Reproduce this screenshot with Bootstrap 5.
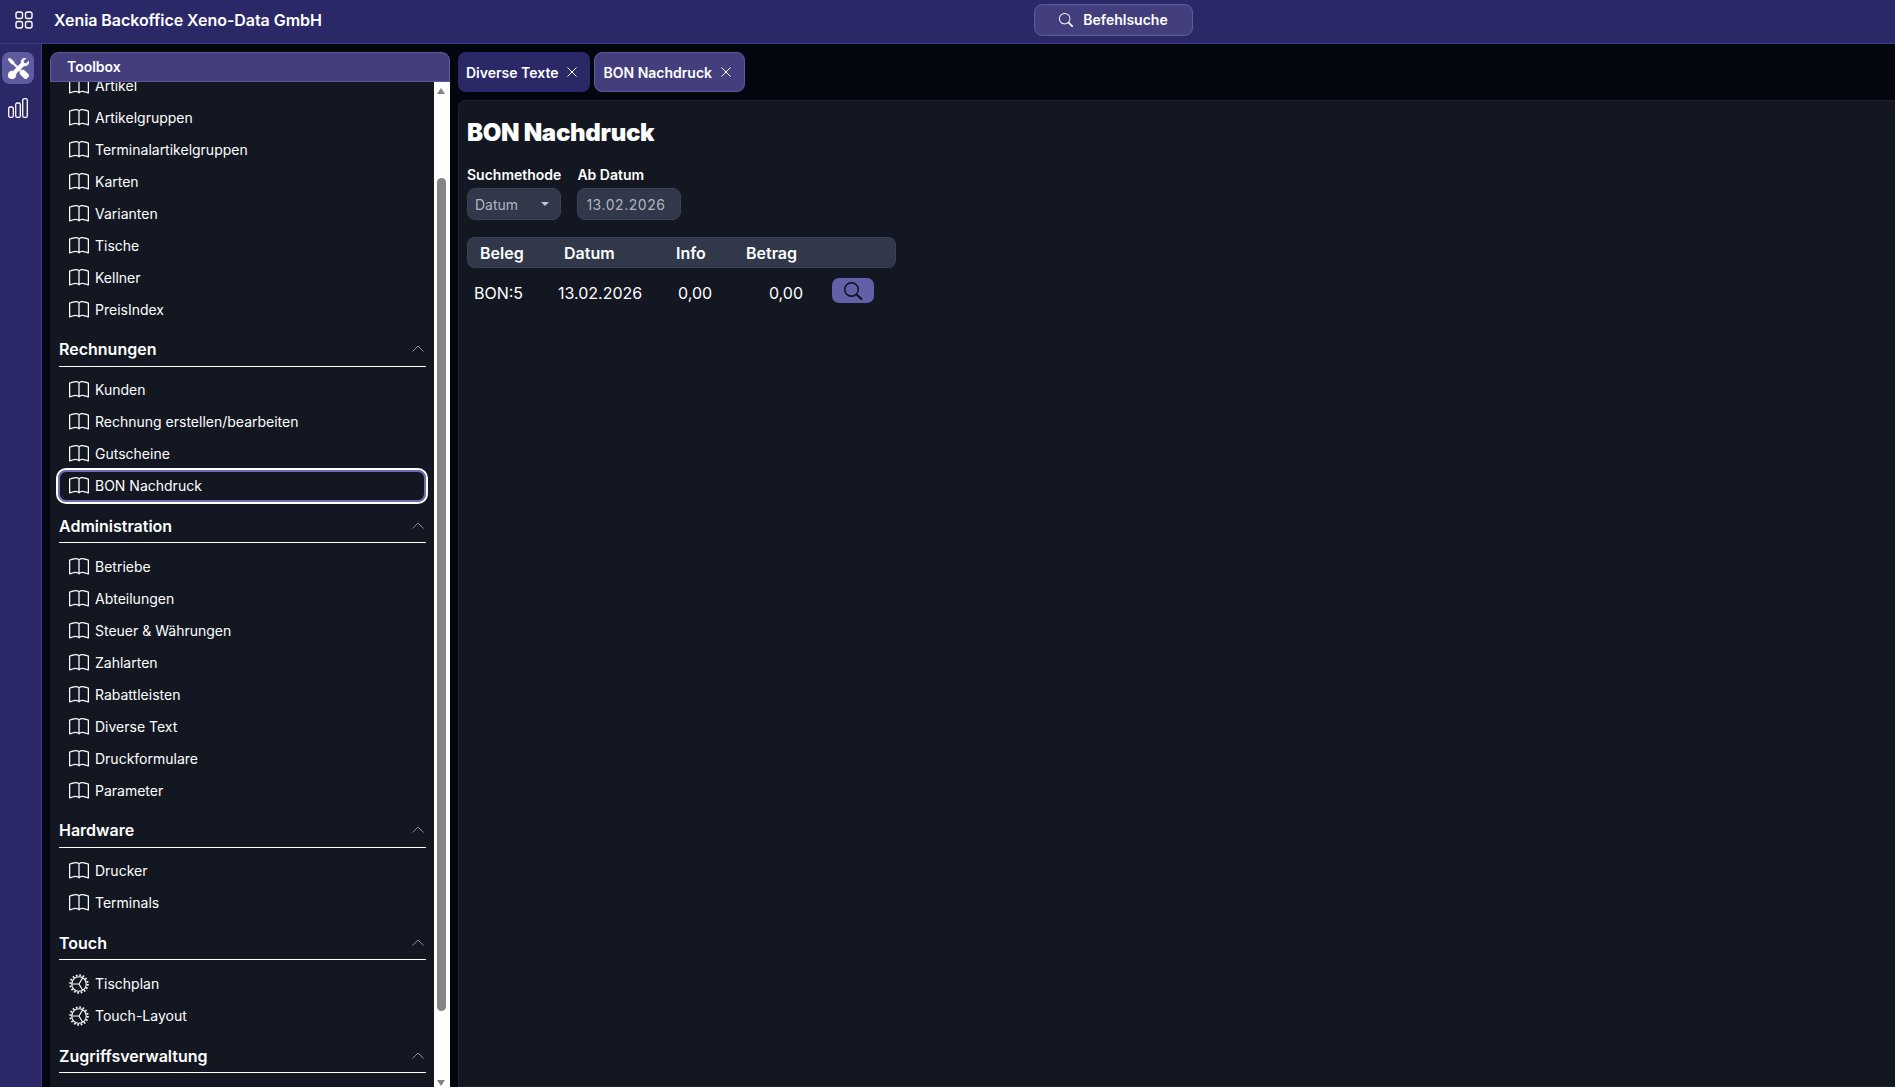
<!DOCTYPE html>
<html lang="de">
<head>
<meta charset="utf-8">
<title>Xenia Backoffice</title>
<link href="https://cdn.jsdelivr.net/npm/bootstrap@5.3.0/dist/css/bootstrap.min.css" rel="stylesheet">
<style>
html,body{height:100%;}
body{background:#04060f;color:#fff;font-family:Inter,"Liberation Sans",sans-serif;font-size:14px;overflow:hidden;}
.app-top{height:44px;background:#2b2868;border-bottom:1px solid #3f3d7c;position:relative;padding-bottom:3px;}
.app-top .grid-ic{width:20px;height:20px;margin-left:14px;margin-right:20px;}
.app-title{font-size:16px;font-weight:600;letter-spacing:-.06px;}
.cmd-btn{position:absolute;left:1034px;top:4px;width:159px;height:32px;background:#433f7c;border:1px solid #5a5a9c;border-radius:8px;color:#fff;font-size:14px;font-weight:600;gap:10px;padding:0 0 1px;}
.app-main{height:1043px;}
.app-rail{width:42px;background:#2b2868;border-right:1px solid #3f3d7c;padding-top:8px;}
.rail-btn{width:32px;height:32px;margin-left:2px;border-radius:8px;margin-bottom:8px;}
.rail-btn.on{background:#5e5c9f;}
.side-panel{width:400px;margin:8px 8px 0 8px;border-radius:8px 8px 0 0;overflow:hidden;}
.side-head{height:30px;background:#433f7c;border:1px solid #5a5a9c;border-radius:8px 8px 0 0;padding-left:16px;font-weight:600;font-size:14px;line-height:27px;}
.side-body{height:1005px;background:#131722;}
.side-view{width:384px;overflow:hidden;}
.side-list{margin:-13px 0 0;padding:0;list-style:none;}
.side-link{height:32px;margin:0 8px;padding-left:11px;gap:6px;color:#fff;font-size:14px;}
.side-link svg{width:20px;height:20px;flex:none;margin-top:1px;}
.side-link.cur{outline:2px solid #fff;outline-offset:0;border:2px solid #6f6db5;border-radius:8px;padding-left:9px;}
.side-sec{height:41.6px;margin:0 8px 7px 9px;border-bottom:1px solid #fff;font-size:16px;font-weight:600;padding-top:8px;}
.side-sec svg{width:14px;height:14px;margin-right:1px;color:#8a8d99;}
.fake-bar{width:16px;background:#fff;position:relative;}
.fake-thumb{position:absolute;left:3px;width:9px;top:96px;height:833px;background:#858585;border-radius:5px;}
.fake-arrow{position:absolute;left:3px;width:0;height:0;border-left:4.5px solid transparent;border-right:4.5px solid transparent;}
.fake-arrow.up{top:6px;border-bottom:6px solid #858585;}
.fake-arrow.down{bottom:1px;border-top:6px solid #858585;}
.work{min-width:0;padding-top:8px;}
.tab-strip{gap:4px;height:40px;}
.tab-pill{height:40px;background:#2b2868;border-radius:8px;padding:0 12px 0 8px;gap:8px;font-weight:600;font-size:14px;}
.tab-pill.act{background:#433f7c;border:1px solid #5a5a9c;padding:0 12px 0 8px;}
.tab-pill svg{width:12px;height:12px;}
.work-card{height:987px;margin-top:8px;background:#131722;border:1px solid #1e2330;border-right:0;border-radius:8px 0 0 0;padding:8px;}
.work-card h1{font-size:24px;font-weight:900;letter-spacing:-.3px;margin:9px 0 19px;line-height:29px;}
.fld-label{font-size:14px;font-weight:600;line-height:17px;margin-bottom:5px;}
.fld-box{height:32px;background:#30384a;border:1px solid #3a4254;border-radius:8px;color:#b0b5c0;font-size:14px;}
.fld-sel{width:94px;padding:0 11px 0 7px;}
.fld-sel i{border-left:4px solid transparent;border-right:4px solid transparent;border-top:4px solid #c5c8d0;}
.fld-date{width:104px;padding-left:8px;letter-spacing:.55px;}
.bon-table{width:429px;margin-top:17px;border-collapse:separate;border-spacing:0;table-layout:fixed;}
.bon-table th{height:31px;background:#30384a;border-top:1px solid #3a4254;border-bottom:1px solid #3a4254;font-size:16px;font-weight:600;padding:0 0 0 13px;}
.bon-table th:first-child{border-left:1px solid #3a4254;border-radius:8px 0 0 8px;padding-left:12px;}
.bon-table th:last-child{border-right:1px solid #3a4254;border-radius:0 8px 8px 0;}
.bon-table td{height:50px;font-size:16px;padding:0 0 0 7px;}
.bon-table td.num-i{padding-left:15px;}
.bon-table td.num-b{text-align:right;padding-right:0;}
.bon-table td.act-c{padding-left:29px;padding-bottom:5px;}
.look-btn{width:42px;height:25px;background:#6260a8;border:0;border-radius:7px;padding:0;color:#0a0c14;}
.look-btn svg{width:22px;height:22px;}
</style>
</head>
<body>
<svg width="0" height="0" class="position-absolute">
<defs>
<symbol id="i-book" viewBox="0 0 16 16"><path fill="currentColor" d="M1 2.828c.885-.37 2.154-.769 3.388-.893 1.33-.134 2.458.063 3.112.752v9.746c-.935-.53-2.12-.603-3.213-.493-1.18.12-2.37.461-3.287.811V2.828zm7.5-.141c.654-.689 1.782-.886 3.112-.752 1.234.124 2.503.523 3.388.893v9.923c-.918-.35-2.107-.692-3.287-.81-1.094-.111-2.278-.039-3.213.492V2.687zM8 1.783C7.015.936 5.587.81 4.287.94c-1.514.153-3.042.672-3.994 1.105A.5.5 0 0 0 0 2.5v11a.5.5 0 0 0 .707.455c.882-.4 2.303-.881 3.68-1.02 1.409-.142 2.59.087 3.223.877a.5.5 0 0 0 .78 0c.633-.79 1.814-1.019 3.222-.877 1.378.139 2.8.62 3.681 1.02A.5.5 0 0 0 16 13.5v-11a.5.5 0 0 0-.293-.455c-.952-.433-2.48-.952-3.994-1.105C10.413.809 8.985.936 8 1.783z"/></symbol>
<symbol id="i-gear" viewBox="0 0 16 16"><g fill="none" stroke="currentColor"><circle cx="8" cy="8" r="5.8" stroke-width=".9"/><circle cx="8" cy="8" r="7" stroke-width="1.6" stroke-dasharray="1.3 1.45"/><path d="M8 8H2.2M8 8l2.9-5M8 8l2.9 5" stroke-width=".9"/></g></symbol>
<symbol id="i-up" viewBox="0 0 14 14"><path fill="none" stroke="currentColor" d="M1.5 9.5 7 4l5.5 5.5"/></symbol>
<symbol id="i-x" viewBox="0 0 12 12"><path fill="none" stroke="currentColor" d="M1.5 1.5l9 9M10.5 1.5l-9 9"/></symbol>
<symbol id="i-search" viewBox="0 0 16 16"><path fill="currentColor" d="M11.742 10.344a6.5 6.5 0 1 0-1.397 1.398h-.001c.03.04.062.078.098.115l3.85 3.85a1 1 0 0 0 1.415-1.414l-3.85-3.85a1.007 1.007 0 0 0-.115-.1zM12 6.5a5.5 5.5 0 1 1-11 0 5.5 5.5 0 0 1 11 0z"/></symbol>
</defs>
</svg>

<header class="app-top d-flex align-items-center">
  <svg class="grid-ic" viewBox="0 0 20 20" fill="none" stroke="#fff" stroke-width="1.4"><rect x="2" y="2" width="6.5" height="6.5" rx="2"/><rect x="11.5" y="2" width="6.5" height="6.5" rx="2"/><rect x="2" y="11.5" width="6.5" height="6.5" rx="2"/><rect x="11.5" y="11.5" width="6.5" height="6.5" rx="2"/></svg>
  <span class="app-title">Xenia Backoffice Xeno-Data GmbH</span>
  <button type="button" class="cmd-btn d-flex align-items-center justify-content-center">
    <svg width="14" height="14"><use href="#i-search"/></svg>Befehlsuche
  </button>
</header>

<div class="app-main d-flex">
  <nav class="app-rail flex-shrink-0">
    <div class="rail-btn on d-flex align-items-center justify-content-center">
      <svg width="21" height="21" viewBox="0 0 16 16" fill="#fff" stroke="#fff" stroke-width=".5"><path d="M1 0 0 1l2.2 3.081a1 1 0 0 0 .815.419h.07a1 1 0 0 1 .708.293l2.675 2.675-2.617 2.654A3.003 3.003 0 0 0 0 13a3 3 0 1 0 5.878-.851l2.654-2.617.968.968-.305.914a1 1 0 0 0 .242 1.023l3.27 3.27a.997.997 0 0 0 1.414 0l1.586-1.586a.997.997 0 0 0 0-1.414l-3.27-3.27a1 1 0 0 0-1.023-.242L10.5 9.5l-.96-.96 2.68-2.643A3.005 3.005 0 0 0 16 3c0-.269-.035-.53-.102-.777l-2.14 2.141L12 4l-.364-1.757L13.777.102a3 3 0 0 0-3.675 3.68L7.462 6.46 4.793 3.793a1 1 0 0 1-.293-.707v-.071a1 1 0 0 0-.419-.814L1 0Z"/></svg>
    </div>
    <div class="rail-btn d-flex align-items-center justify-content-center">
      <svg width="20" height="20" viewBox="0 0 20 20" fill="none" stroke="#fff" stroke-width="1.3"><rect x=".7" y="9" width="4.6" height="10.3" rx="1.6"/><rect x="7.7" y="5" width="4.6" height="14.3" rx="1.6"/><rect x="14.7" y=".7" width="4.6" height="18.6" rx="1.6"/></svg>
    </div>
  </nav>

  <aside class="side-panel flex-shrink-0">
    <div class="side-head">Toolbox</div>
    <div class="side-body d-flex justify-content-between">
      <div class="side-view">
        <ul class="side-list">
          <li class="side-link d-flex align-items-center"><svg><use href="#i-book"/></svg>Artikel</li>
          <li class="side-link d-flex align-items-center"><svg><use href="#i-book"/></svg>Artikelgruppen</li>
          <li class="side-link d-flex align-items-center"><svg><use href="#i-book"/></svg>Terminalartikelgruppen</li>
          <li class="side-link d-flex align-items-center"><svg><use href="#i-book"/></svg>Karten</li>
          <li class="side-link d-flex align-items-center"><svg><use href="#i-book"/></svg>Varianten</li>
          <li class="side-link d-flex align-items-center"><svg><use href="#i-book"/></svg>Tische</li>
          <li class="side-link d-flex align-items-center"><svg><use href="#i-book"/></svg>Kellner</li>
          <li class="side-link d-flex align-items-center"><svg><use href="#i-book"/></svg>PreisIndex</li>
          <li class="side-sec d-flex align-items-center justify-content-between"><span>Rechnungen</span><svg><use href="#i-up"/></svg></li>
          <li class="side-link d-flex align-items-center"><svg><use href="#i-book"/></svg>Kunden</li>
          <li class="side-link d-flex align-items-center"><svg><use href="#i-book"/></svg>Rechnung erstellen/bearbeiten</li>
          <li class="side-link d-flex align-items-center"><svg><use href="#i-book"/></svg>Gutscheine</li>
          <li class="side-link cur d-flex align-items-center"><svg><use href="#i-book"/></svg>BON Nachdruck</li>
          <li class="side-sec d-flex align-items-center justify-content-between"><span>Administration</span><svg><use href="#i-up"/></svg></li>
          <li class="side-link d-flex align-items-center"><svg><use href="#i-book"/></svg>Betriebe</li>
          <li class="side-link d-flex align-items-center"><svg><use href="#i-book"/></svg>Abteilungen</li>
          <li class="side-link d-flex align-items-center"><svg><use href="#i-book"/></svg>Steuer &amp; Währungen</li>
          <li class="side-link d-flex align-items-center"><svg><use href="#i-book"/></svg>Zahlarten</li>
          <li class="side-link d-flex align-items-center"><svg><use href="#i-book"/></svg>Rabattleisten</li>
          <li class="side-link d-flex align-items-center"><svg><use href="#i-book"/></svg>Diverse Text</li>
          <li class="side-link d-flex align-items-center"><svg><use href="#i-book"/></svg>Druckformulare</li>
          <li class="side-link d-flex align-items-center"><svg><use href="#i-book"/></svg>Parameter</li>
          <li class="side-sec d-flex align-items-center justify-content-between"><span>Hardware</span><svg><use href="#i-up"/></svg></li>
          <li class="side-link d-flex align-items-center"><svg><use href="#i-book"/></svg>Drucker</li>
          <li class="side-link d-flex align-items-center"><svg><use href="#i-book"/></svg>Terminals</li>
          <li class="side-sec d-flex align-items-center justify-content-between"><span>Touch</span><svg><use href="#i-up"/></svg></li>
          <li class="side-link d-flex align-items-center"><svg><use href="#i-gear"/></svg>Tischplan</li>
          <li class="side-link d-flex align-items-center"><svg><use href="#i-gear"/></svg>Touch-Layout</li>
          <li class="side-sec d-flex align-items-center justify-content-between"><span>Zugriffsverwaltung</span><svg><use href="#i-up"/></svg></li>
        </ul>
      </div>
      <div class="fake-bar">
        <div class="fake-arrow up"></div>
        <div class="fake-thumb"></div>
        <div class="fake-arrow down"></div>
      </div>
    </div>
  </aside>

  <main class="work flex-grow-1">
    <div class="tab-strip d-flex">
      <div class="tab-pill d-flex align-items-center">Diverse Texte<svg><use href="#i-x"/></svg></div>
      <div class="tab-pill act d-flex align-items-center">BON Nachdruck<svg><use href="#i-x"/></svg></div>
    </div>
    <section class="work-card">
      <h1>BON Nachdruck</h1>
      <div class="d-flex gap-3">
        <div>
          <div class="fld-label">Suchmethode</div>
          <div class="fld-box fld-sel d-flex align-items-center justify-content-between">Datum<i></i></div>
        </div>
        <div>
          <div class="fld-label">Ab Datum</div>
          <div class="fld-box fld-date d-flex align-items-center">13.02.2026</div>
        </div>
      </div>
      <table class="bon-table">
        <colgroup><col style="width:84px"><col style="width:112px"><col style="width:70px"><col style="width:70px"><col></colgroup>
        <thead><tr><th>Beleg</th><th>Datum</th><th>Info</th><th>Betrag</th><th></th></tr></thead>
        <tbody><tr>
          <td>BON:5</td><td>13.02.2026</td><td class="num-i">0,00</td><td class="num-b">0,00</td>
          <td class="act-c"><button type="button" class="look-btn d-flex align-items-center justify-content-center"><svg viewBox="0 0 22 22" fill="none" stroke="currentColor" stroke-width="1.4"><circle cx="9.5" cy="9.5" r="6.8"/><path d="M14.5 14.5l5.5 5" stroke-width="1.8"/></svg></button></td>
        </tr></tbody>
      </table>
    </section>
  </main>
</div>
<script src="https://cdn.jsdelivr.net/npm/bootstrap@5.3.0/dist/js/bootstrap.bundle.min.js"></script>
</body>
</html>
